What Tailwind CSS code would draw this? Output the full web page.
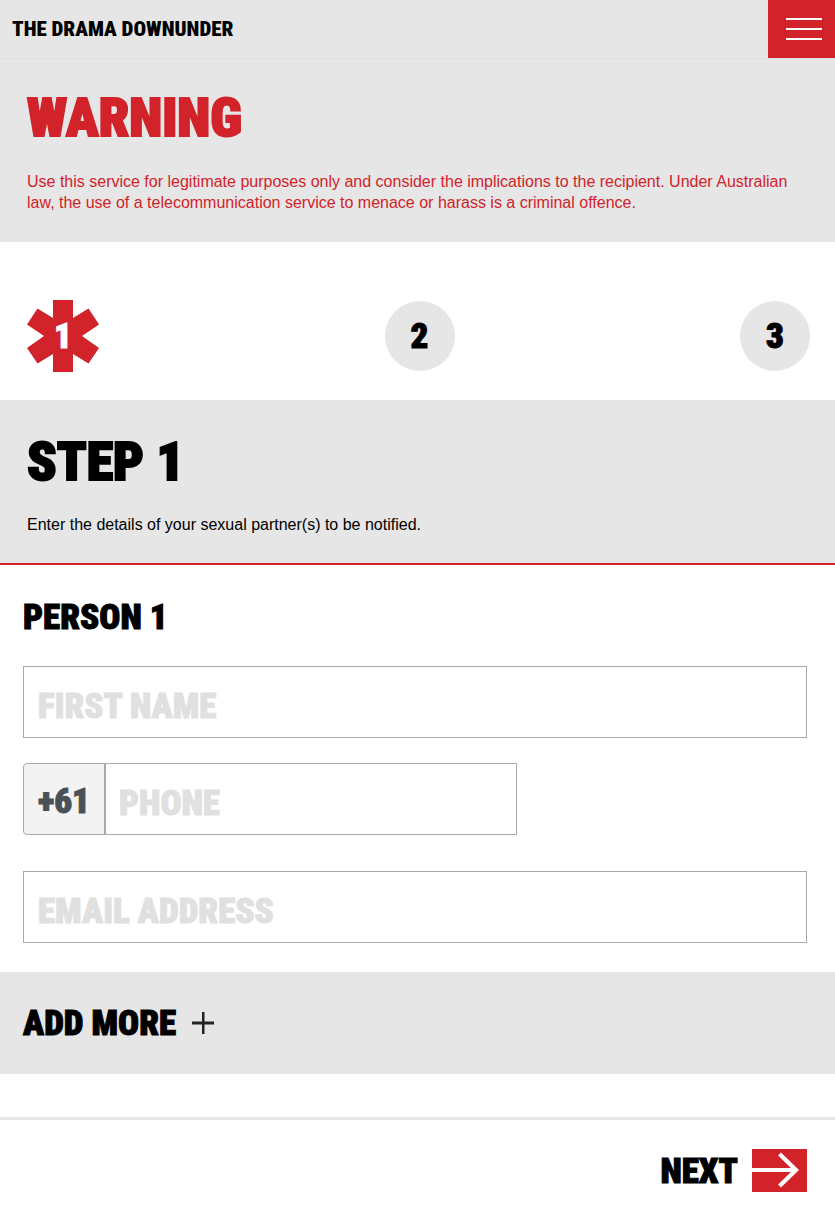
<!DOCTYPE html>
<html lang="en">
<head>
<meta charset="utf-8">
<meta name="viewport" content="width=device-width, initial-scale=1">
<title>The Drama Downunder</title>
<script src="https://cdn.jsdelivr.net/npm/@tailwindcss/browser@4"></script>
</head>
<body class="bg-white text-black text-base leading-[21px] font-['Liberation_Sans',Arial,sans-serif]">
<header class="flex items-center justify-between h-[59px] bg-[#e6e6e6] border-b border-[#e1e1e1]">
  <a href="#" class="pl-3 text-[21px] leading-6 font-black uppercase whitespace-nowrap font-['Roboto_Condensed',sans-serif]">The Drama Downunder</a>
  <button type="button" aria-label="Menu" class="flex flex-col items-end justify-center gap-2 w-[67px] h-[58px] pr-[13px] bg-[#d2232a]">
    <span class="block w-9 h-0.5 bg-white"></span>
    <span class="block w-9 h-0.5 bg-white"></span>
    <span class="block w-9 h-0.5 bg-white"></span>
  </button>
</header>
<main>
  <section class="bg-[#e6e6e6] text-[#d2232a] px-[27px] pt-[27px] pb-[29px]">
    <h1 class="text-[54px] leading-[64px] font-black uppercase font-['Roboto_Condensed',sans-serif] [-webkit-text-stroke:2px_currentColor]">Warning</h1>
    <p class="mt-[21px]">Use this service for legitimate purposes only and consider the implications to the recipient. Under Australian law, the use of a telecommunication service to menace or harass is a criminal offence.</p>
  </section>
  <ol class="flex items-center justify-between h-[158px] pl-[27px] pr-[25px] pt-[30px] text-[35px] leading-10 font-black font-['Roboto_Condensed',sans-serif] [-webkit-text-stroke:1px_currentColor]">
    <li class="grid place-items-center size-[72px] text-white">
      <svg class="col-start-1 row-start-1 size-[72px]" viewBox="1 1 72 72" fill="#d2232a" aria-hidden="true"><path d="M27 1h20v18l15.500-9.500L73 25.500 56 37l17 12-10.500 15.500L47 55v18H27V55l-15.500 9.500L1 49l17-12L1 25.500 11.500 9.500 27 19z"/></svg>
      <span class="col-start-1 row-start-1 pt-0.5">1</span>
    </li>
    <li class="grid place-items-center size-[70px] pt-0.5 rounded-full bg-[#e6e6e6]">2</li>
    <li class="grid place-items-center size-[70px] pt-0.5 rounded-full bg-[#e6e6e6]">3</li>
  </ol>
  <section class="bg-[#e6e6e6] border-b-2 border-[#d2232a] px-[27px] pt-[30px] pb-7">
    <h2 class="text-[54px] leading-[64px] font-black uppercase font-['Roboto_Condensed',sans-serif] [-webkit-text-stroke:2px_currentColor]">Step 1</h2>
    <p class="mt-5">Enter the details of your sexual partner(s) to be notified.</p>
  </section>
  <form>
    <fieldset class="pl-[23px] pr-7 pb-[29px] text-[35px] font-black font-['Roboto_Condensed',sans-serif]">
      <legend class="pt-[33px] leading-10 uppercase [-webkit-text-stroke:1px_currentColor]">Person 1</legend>
      <input type="text" aria-label="First name" placeholder="FIRST NAME" class="block w-full h-[72px] mt-7 px-3.5 pt-2 border border-[#a9a9a9] placeholder:text-[#e0e0e0] [-webkit-text-stroke:1px_currentColor]">
      <div class="flex w-[63%] h-[72px] mt-[25px]">
        <label for="phone" class="flex items-center justify-center w-[82px] shrink-0 pt-1 border border-[#a9a9a9] rounded-l-[4px] bg-[#f3f3f3] text-[#495057] [-webkit-text-stroke:1px_currentColor]">+61</label>
        <input id="phone" type="tel" placeholder="PHONE" class="min-w-0 flex-1 px-[13px] pt-2 border border-[#a9a9a9] placeholder:text-[#e0e0e0] [-webkit-text-stroke:1px_currentColor]">
      </div>
      <input type="email" aria-label="Email address" placeholder="EMAIL ADDRESS" class="block w-full h-[72px] mt-9 px-3.5 pt-2 border border-[#a9a9a9] placeholder:text-[#e0e0e0] [-webkit-text-stroke:1px_currentColor]">
    </fieldset>
    <div class="flex items-center h-[102px] px-[23px] bg-[#e6e6e6]">
      <button type="button" class="flex items-center gap-4 text-[35px] leading-10 font-black uppercase font-['Roboto_Condensed',sans-serif]">
        <span class="pt-0.5 [-webkit-text-stroke:1px_currentColor]">Add more</span>
        <svg class="w-[22px] h-[22px]" viewBox="0 0 22 22" fill="#222" aria-hidden="true"><path d="M0 9.500h22v3H0zM10 0h2.500v22H10z"/></svg>
      </button>
    </div>
    <div class="flex justify-end mt-[43px] pt-[29px] pb-[29px] pr-7 border-t-[3px] border-[#e6e6e6]">
      <button type="submit" class="flex items-center gap-3.5 text-[35px] leading-10 font-black uppercase font-['Roboto_Condensed',sans-serif]">
        <span class="pt-0.5 [-webkit-text-stroke:1px_currentColor]">Next</span>
        <svg class="w-[55px] h-[43px]" viewBox="0 0 55 43" aria-hidden="true"><path fill="#d2232a" d="M0 0h55v43H0z"/><path d="M0 21h45M27.500 5L44 21 27.500 37" fill="none" stroke="#fff" stroke-width="4.200"/></svg>
      </button>
    </div>
  </form>
</main>
</body>
</html>
